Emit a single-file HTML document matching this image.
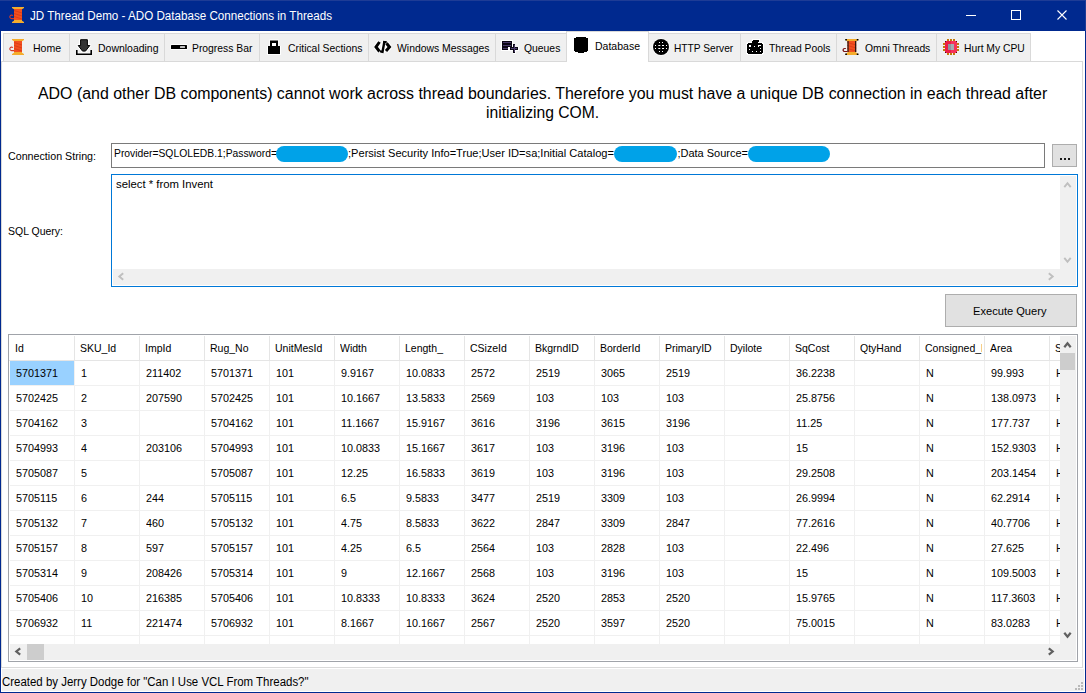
<!DOCTYPE html>
<html><head><meta charset="utf-8"><style>
html,body{margin:0;padding:0;width:1086px;height:693px;overflow:hidden;background:#fff}
body div, body span, body svg{position:absolute}
.t{font-family:"Liberation Sans", sans-serif;white-space:pre;transform-origin:0 0;color:#000}
</style></head><body>
<div style="left:0px;top:0px;width:1086px;height:31px;background:#00298F"></div><div style="left:0px;top:0px;width:1px;height:693px;background:#00298F"></div><div style="left:1085px;top:0px;width:1px;height:693px;background:#00298F"></div><div style="left:0px;top:692px;width:1086px;height:1px;background:#00298F"></div><div style="left:0px;top:0px;width:1086px;height:1px;background:#1E3C96"></div><div style="left:1085px;top:0px;width:1px;height:31px;background:#1E3C96"></div><svg style="left:9px;top:7px" width="16" height="16" viewBox="0 0 16 16" preserveAspectRatio="none"><path d="M3 0h12v1l-2 1.2v0.8h-8v-0.8l-2-1.2z" fill="#F4AC2C"/><rect x="5" y="2" width="8" height="11" fill="#F24F1F"/><path d="M5 3.5l8 2.5M5 6.5l8 2.5M5 9.5l8 2.5" stroke="#D43817" stroke-width="0.9" opacity="0.8"/><path d="M5 13h8v0.8l2 1.2v1h-12v-1l2-1.2z" fill="#F4AC2C"/><path d="M5 11.6H2.6A1.75 1.75 0 1 1 3.9 8.7" stroke="#D23A2A" stroke-width="1.1" fill="none"/></svg><span class="t" style="left:30px;top:10px;font-size:12px;line-height:12px;color:#fff;transform:scaleX(0.9688181701527011);">JD Thread Demo - ADO Database Connections in Threads</span><div style="left:966px;top:15px;width:10px;height:1px;background:#fff"></div><div style="left:1011px;top:10px;width:10px;height:10px;border:1px solid #fff;box-sizing:border-box"></div><svg style="left:1057px;top:10px" width="10" height="10" viewBox="0 0 10 10"><path d="M0.5 0.5L9.5 9.5M9.5 0.5L0.5 9.5" stroke="#fff" stroke-width="1.1"/></svg><div style="left:1px;top:61px;width:1082px;height:607px;border:1px solid #D9D9D9;box-sizing:border-box;background:#fff"></div><div style="left:3px;top:33px;width:67px;height:29px;background:#F0F0F0;border:1px solid #D9D9D9;box-sizing:border-box"></div><div style="left:69px;top:33px;width:96px;height:29px;background:#F0F0F0;border:1px solid #D9D9D9;box-sizing:border-box"></div><div style="left:164px;top:33px;width:96px;height:29px;background:#F0F0F0;border:1px solid #D9D9D9;box-sizing:border-box"></div><div style="left:259px;top:33px;width:110px;height:29px;background:#F0F0F0;border:1px solid #D9D9D9;box-sizing:border-box"></div><div style="left:368px;top:33px;width:128px;height:29px;background:#F0F0F0;border:1px solid #D9D9D9;box-sizing:border-box"></div><div style="left:495px;top:33px;width:72px;height:29px;background:#F0F0F0;border:1px solid #D9D9D9;box-sizing:border-box"></div><div style="left:648px;top:33px;width:93px;height:29px;background:#F0F0F0;border:1px solid #D9D9D9;box-sizing:border-box"></div><div style="left:740px;top:33px;width:97px;height:29px;background:#F0F0F0;border:1px solid #D9D9D9;box-sizing:border-box"></div><div style="left:836px;top:33px;width:101px;height:29px;background:#F0F0F0;border:1px solid #D9D9D9;box-sizing:border-box"></div><div style="left:936px;top:33px;width:95px;height:29px;background:#F0F0F0;border:1px solid #D9D9D9;box-sizing:border-box"></div><div style="left:566px;top:31px;width:83px;height:31px;background:#fff;border:1px solid #D9D9D9;border-bottom:none;box-sizing:border-box"></div><span class="t" style="left:32.5px;top:43px;font-size:11px;line-height:11px;color:#000;transform:scaleX(0.9567291311754684);">Home</span><span class="t" style="left:97.5px;top:43px;font-size:11px;line-height:11px;color:#000;transform:scaleX(0.9512578616352201);">Downloading</span><span class="t" style="left:192.4px;top:43px;font-size:11px;line-height:11px;color:#000;transform:scaleX(0.9408099688473519);">Progress Bar</span><span class="t" style="left:287.6px;top:43px;font-size:11px;line-height:11px;color:#000;transform:scaleX(0.9429657794676806);">Critical Sections</span><span class="t" style="left:396.5px;top:43px;font-size:11px;line-height:11px;color:#000;transform:scaleX(0.9458077709611452);">Windows Messages</span><span class="t" style="left:523.7px;top:43px;font-size:11px;line-height:11px;color:#000;transform:scaleX(0.9428571428571428);">Queues</span><span class="t" style="left:674.4px;top:43px;font-size:11px;line-height:11px;color:#000;transform:scaleX(0.925);">HTTP Server</span><span class="t" style="left:769px;top:43px;font-size:11px;line-height:11px;color:#000;transform:scaleX(0.9388379204892965);">Thread Pools</span><span class="t" style="left:864.9px;top:43px;font-size:11px;line-height:11px;color:#000;transform:scaleX(0.939568345323741);">Omni Threads</span><span class="t" style="left:964.4px;top:43px;font-size:11px;line-height:11px;color:#000;transform:scaleX(0.9382716049382716);">Hurt My CPU</span><span class="t" style="left:594.8px;top:41px;font-size:11px;line-height:11px;color:#000;transform:scaleX(0.9554140127388535);">Database</span><span class="t" style="left:38px;top:86px;font-size:16px;line-height:16px;color:#000;transform:scaleX(0.9947757516017743);">ADO (and other DB components) cannot work across thread boundaries. Therefore you must have a unique DB connection in each thread after</span><span class="t" style="left:485.9px;top:105px;font-size:16px;line-height:16px;color:#000;transform:scaleX(0.9793234708884851);">initializing COM.</span><span class="t" style="left:8px;top:151px;font-size:11px;line-height:11px;color:#000;transform:scaleX(0.9723756906077348);">Connection String:</span><div style="left:111px;top:143px;width:934px;height:25px;border:1px solid #7A7A7A;box-sizing:border-box;background:#fff"></div><span class="t" style="left:113.5px;top:148px;font-size:11px;line-height:11px;color:#000;transform:scaleX(0.9387237963602857);">Provider=SQLOLEDB.1;Password=</span><div style="left:276px;top:146px;width:72px;height:16px;background:#00A2E8;border-radius:8px"></div><span class="t" style="left:348px;top:148px;font-size:11px;line-height:11px;color:#000;transform:scaleX(1.0074994318612227);">;Persist Security Info=True;User ID=sa;Initial Catalog=</span><div style="left:614px;top:146px;width:63px;height:16px;background:#00A2E8;border-radius:8px"></div><span class="t" style="left:677.4px;top:148px;font-size:11px;line-height:11px;color:#000;">;Data Source=</span><div style="left:748px;top:146px;width:82px;height:16px;background:#00A2E8;border-radius:8px"></div><div style="left:1052px;top:144px;width:25px;height:23px;background:#E1E1E1;border:1px solid #ADADAD;box-sizing:border-box"></div><div style="left:1059.5px;top:158px;width:2px;height:2px;background:#1a1a1a"></div><div style="left:1063.5px;top:158px;width:2px;height:2px;background:#1a1a1a"></div><div style="left:1067.5px;top:158px;width:2px;height:2px;background:#1a1a1a"></div><span class="t" style="left:8px;top:226px;font-size:11px;line-height:11px;color:#000;transform:scaleX(0.9537020981446159);">SQL Query:</span><div style="left:111px;top:174px;width:967px;height:113px;border:1px solid #0078D7;box-sizing:border-box;background:#fff"></div><span class="t" style="left:116px;top:179px;font-size:11px;line-height:11px;color:#000;transform:scaleX(1.0301614273576891);">select * from Invent</span><div style="left:113px;top:269px;width:947px;height:16px;background:#F0F0F0"></div><div style="left:1060px;top:176px;width:16px;height:109px;background:#F0F0F0"></div><div style="left:945px;top:294px;width:132px;height:33px;background:#E1E1E1;border:1px solid #ADADAD;box-sizing:border-box"></div><span class="t" style="left:973.3px;top:306px;font-size:11px;line-height:11px;color:#000;transform:scaleX(1.01);">Execute Query</span><div style="left:8px;top:334px;width:1070px;height:328px;border:1px solid #A0A3A9;box-sizing:border-box;background:#fff"></div><div style="left:9px;top:335px;width:1051px;height:309px;overflow:hidden"><div style="left:1px;top:26px;width:64px;height:24px;background:#99D1FF"></div><div style="left:0px;top:25px;width:1051px;height:1px;background:#E5E5E5"></div><div style="left:65px;top:1px;width:1px;height:24px;background:#E5E5E5"></div><div style="left:65px;top:26px;width:1px;height:300px;background:#F0F0F0"></div><div style="left:130px;top:1px;width:1px;height:24px;background:#E5E5E5"></div><div style="left:130px;top:26px;width:1px;height:300px;background:#F0F0F0"></div><div style="left:195px;top:1px;width:1px;height:24px;background:#E5E5E5"></div><div style="left:195px;top:26px;width:1px;height:300px;background:#F0F0F0"></div><div style="left:260px;top:1px;width:1px;height:24px;background:#E5E5E5"></div><div style="left:260px;top:26px;width:1px;height:300px;background:#F0F0F0"></div><div style="left:325px;top:1px;width:1px;height:24px;background:#E5E5E5"></div><div style="left:325px;top:26px;width:1px;height:300px;background:#F0F0F0"></div><div style="left:390px;top:1px;width:1px;height:24px;background:#E5E5E5"></div><div style="left:390px;top:26px;width:1px;height:300px;background:#F0F0F0"></div><div style="left:455px;top:1px;width:1px;height:24px;background:#E5E5E5"></div><div style="left:455px;top:26px;width:1px;height:300px;background:#F0F0F0"></div><div style="left:520px;top:1px;width:1px;height:24px;background:#E5E5E5"></div><div style="left:520px;top:26px;width:1px;height:300px;background:#F0F0F0"></div><div style="left:585px;top:1px;width:1px;height:24px;background:#E5E5E5"></div><div style="left:585px;top:26px;width:1px;height:300px;background:#F0F0F0"></div><div style="left:650px;top:1px;width:1px;height:24px;background:#E5E5E5"></div><div style="left:650px;top:26px;width:1px;height:300px;background:#F0F0F0"></div><div style="left:715px;top:1px;width:1px;height:24px;background:#E5E5E5"></div><div style="left:715px;top:26px;width:1px;height:300px;background:#F0F0F0"></div><div style="left:780px;top:1px;width:1px;height:24px;background:#E5E5E5"></div><div style="left:780px;top:26px;width:1px;height:300px;background:#F0F0F0"></div><div style="left:845px;top:1px;width:1px;height:24px;background:#E5E5E5"></div><div style="left:845px;top:26px;width:1px;height:300px;background:#F0F0F0"></div><div style="left:910px;top:1px;width:1px;height:24px;background:#E5E5E5"></div><div style="left:910px;top:26px;width:1px;height:300px;background:#F0F0F0"></div><div style="left:975px;top:1px;width:1px;height:24px;background:#E5E5E5"></div><div style="left:975px;top:26px;width:1px;height:300px;background:#F0F0F0"></div><div style="left:1040px;top:1px;width:1px;height:24px;background:#E5E5E5"></div><div style="left:1040px;top:26px;width:1px;height:300px;background:#F0F0F0"></div><div style="left:1px;top:50px;width:1050px;height:1px;background:#F0F0F0"></div><div style="left:1px;top:75px;width:1050px;height:1px;background:#F0F0F0"></div><div style="left:1px;top:100px;width:1050px;height:1px;background:#F0F0F0"></div><div style="left:1px;top:125px;width:1050px;height:1px;background:#F0F0F0"></div><div style="left:1px;top:150px;width:1050px;height:1px;background:#F0F0F0"></div><div style="left:1px;top:175px;width:1050px;height:1px;background:#F0F0F0"></div><div style="left:1px;top:200px;width:1050px;height:1px;background:#F0F0F0"></div><div style="left:1px;top:225px;width:1050px;height:1px;background:#F0F0F0"></div><div style="left:1px;top:250px;width:1050px;height:1px;background:#F0F0F0"></div><div style="left:1px;top:275px;width:1050px;height:1px;background:#F0F0F0"></div><div style="left:1px;top:300px;width:1050px;height:1px;background:#F0F0F0"></div><div style="left:1px;top:325px;width:1050px;height:1px;background:#F0F0F0"></div><span class="t" style="left:6px;top:8px;font-size:11px;line-height:11px;width:59px;overflow:hidden"><span style="position:static;display:inline-block;transform:scaleX(0.955);transform-origin:0 0">Id</span></span><span class="t" style="left:71px;top:8px;font-size:11px;line-height:11px;width:59px;overflow:hidden"><span style="position:static;display:inline-block;transform:scaleX(0.955);transform-origin:0 0">SKU_Id</span></span><span class="t" style="left:136px;top:8px;font-size:11px;line-height:11px;width:59px;overflow:hidden"><span style="position:static;display:inline-block;transform:scaleX(0.955);transform-origin:0 0">ImpId</span></span><span class="t" style="left:201px;top:8px;font-size:11px;line-height:11px;width:59px;overflow:hidden"><span style="position:static;display:inline-block;transform:scaleX(0.955);transform-origin:0 0">Rug_No</span></span><span class="t" style="left:266px;top:8px;font-size:11px;line-height:11px;width:59px;overflow:hidden"><span style="position:static;display:inline-block;transform:scaleX(0.955);transform-origin:0 0">UnitMesId</span></span><span class="t" style="left:331px;top:8px;font-size:11px;line-height:11px;width:59px;overflow:hidden"><span style="position:static;display:inline-block;transform:scaleX(0.955);transform-origin:0 0">Width</span></span><span class="t" style="left:396px;top:8px;font-size:11px;line-height:11px;width:59px;overflow:hidden"><span style="position:static;display:inline-block;transform:scaleX(0.955);transform-origin:0 0">Length_</span></span><span class="t" style="left:461px;top:8px;font-size:11px;line-height:11px;width:59px;overflow:hidden"><span style="position:static;display:inline-block;transform:scaleX(0.955);transform-origin:0 0">CSizeId</span></span><span class="t" style="left:526px;top:8px;font-size:11px;line-height:11px;width:59px;overflow:hidden"><span style="position:static;display:inline-block;transform:scaleX(0.955);transform-origin:0 0">BkgrndID</span></span><span class="t" style="left:591px;top:8px;font-size:11px;line-height:11px;width:59px;overflow:hidden"><span style="position:static;display:inline-block;transform:scaleX(0.955);transform-origin:0 0">BorderId</span></span><span class="t" style="left:656px;top:8px;font-size:11px;line-height:11px;width:59px;overflow:hidden"><span style="position:static;display:inline-block;transform:scaleX(0.955);transform-origin:0 0">PrimaryID</span></span><span class="t" style="left:721px;top:8px;font-size:11px;line-height:11px;width:59px;overflow:hidden"><span style="position:static;display:inline-block;transform:scaleX(0.955);transform-origin:0 0">Dyilote</span></span><span class="t" style="left:786px;top:8px;font-size:11px;line-height:11px;width:59px;overflow:hidden"><span style="position:static;display:inline-block;transform:scaleX(0.955);transform-origin:0 0">SqCost</span></span><span class="t" style="left:851px;top:8px;font-size:11px;line-height:11px;width:59px;overflow:hidden"><span style="position:static;display:inline-block;transform:scaleX(0.955);transform-origin:0 0">QtyHand</span></span><span class="t" style="left:916px;top:8px;font-size:11px;line-height:11px;width:57px;overflow:hidden"><span style="position:static;display:inline-block;transform:scaleX(0.955);transform-origin:0 0">Consigned_F</span></span><span class="t" style="left:981px;top:8px;font-size:11px;line-height:11px;width:59px;overflow:hidden"><span style="position:static;display:inline-block;transform:scaleX(0.955);transform-origin:0 0">Area</span></span><span class="t" style="left:1046px;top:8px;font-size:11px;line-height:11px;width:59px;overflow:hidden"><span style="position:static;display:inline-block;transform:scaleX(0.955);transform-origin:0 0">S</span></span><span class="t" style="left:6.5px;top:33px;font-size:11px;line-height:11px;transform:scaleX(0.98)">5701371</span><span class="t" style="left:71.5px;top:33px;font-size:11px;line-height:11px;transform:scaleX(0.98)">1</span><span class="t" style="left:136.5px;top:33px;font-size:11px;line-height:11px;transform:scaleX(0.98)">211402</span><span class="t" style="left:201.5px;top:33px;font-size:11px;line-height:11px;transform:scaleX(0.98)">5701371</span><span class="t" style="left:266.5px;top:33px;font-size:11px;line-height:11px;transform:scaleX(0.98)">101</span><span class="t" style="left:331.5px;top:33px;font-size:11px;line-height:11px;transform:scaleX(0.98)">9.9167</span><span class="t" style="left:396.5px;top:33px;font-size:11px;line-height:11px;transform:scaleX(0.98)">10.0833</span><span class="t" style="left:461.5px;top:33px;font-size:11px;line-height:11px;transform:scaleX(0.98)">2572</span><span class="t" style="left:526.5px;top:33px;font-size:11px;line-height:11px;transform:scaleX(0.98)">2519</span><span class="t" style="left:591.5px;top:33px;font-size:11px;line-height:11px;transform:scaleX(0.98)">3065</span><span class="t" style="left:656.5px;top:33px;font-size:11px;line-height:11px;transform:scaleX(0.98)">2519</span><span class="t" style="left:786.5px;top:33px;font-size:11px;line-height:11px;transform:scaleX(0.98)">36.2238</span><span class="t" style="left:916.5px;top:33px;font-size:11px;line-height:11px;transform:scaleX(0.98)">N</span><span class="t" style="left:981.5px;top:33px;font-size:11px;line-height:11px;transform:scaleX(0.98)">99.993</span><span class="t" style="left:1046.5px;top:33px;font-size:11px;line-height:11px;transform:scaleX(0.98)">H</span><span class="t" style="left:6.5px;top:58px;font-size:11px;line-height:11px;transform:scaleX(0.98)">5702425</span><span class="t" style="left:71.5px;top:58px;font-size:11px;line-height:11px;transform:scaleX(0.98)">2</span><span class="t" style="left:136.5px;top:58px;font-size:11px;line-height:11px;transform:scaleX(0.98)">207590</span><span class="t" style="left:201.5px;top:58px;font-size:11px;line-height:11px;transform:scaleX(0.98)">5702425</span><span class="t" style="left:266.5px;top:58px;font-size:11px;line-height:11px;transform:scaleX(0.98)">101</span><span class="t" style="left:331.5px;top:58px;font-size:11px;line-height:11px;transform:scaleX(0.98)">10.1667</span><span class="t" style="left:396.5px;top:58px;font-size:11px;line-height:11px;transform:scaleX(0.98)">13.5833</span><span class="t" style="left:461.5px;top:58px;font-size:11px;line-height:11px;transform:scaleX(0.98)">2569</span><span class="t" style="left:526.5px;top:58px;font-size:11px;line-height:11px;transform:scaleX(0.98)">103</span><span class="t" style="left:591.5px;top:58px;font-size:11px;line-height:11px;transform:scaleX(0.98)">103</span><span class="t" style="left:656.5px;top:58px;font-size:11px;line-height:11px;transform:scaleX(0.98)">103</span><span class="t" style="left:786.5px;top:58px;font-size:11px;line-height:11px;transform:scaleX(0.98)">25.8756</span><span class="t" style="left:916.5px;top:58px;font-size:11px;line-height:11px;transform:scaleX(0.98)">N</span><span class="t" style="left:981.5px;top:58px;font-size:11px;line-height:11px;transform:scaleX(0.98)">138.0973</span><span class="t" style="left:1046.5px;top:58px;font-size:11px;line-height:11px;transform:scaleX(0.98)">H</span><span class="t" style="left:6.5px;top:83px;font-size:11px;line-height:11px;transform:scaleX(0.98)">5704162</span><span class="t" style="left:71.5px;top:83px;font-size:11px;line-height:11px;transform:scaleX(0.98)">3</span><span class="t" style="left:201.5px;top:83px;font-size:11px;line-height:11px;transform:scaleX(0.98)">5704162</span><span class="t" style="left:266.5px;top:83px;font-size:11px;line-height:11px;transform:scaleX(0.98)">101</span><span class="t" style="left:331.5px;top:83px;font-size:11px;line-height:11px;transform:scaleX(0.98)">11.1667</span><span class="t" style="left:396.5px;top:83px;font-size:11px;line-height:11px;transform:scaleX(0.98)">15.9167</span><span class="t" style="left:461.5px;top:83px;font-size:11px;line-height:11px;transform:scaleX(0.98)">3616</span><span class="t" style="left:526.5px;top:83px;font-size:11px;line-height:11px;transform:scaleX(0.98)">3196</span><span class="t" style="left:591.5px;top:83px;font-size:11px;line-height:11px;transform:scaleX(0.98)">3615</span><span class="t" style="left:656.5px;top:83px;font-size:11px;line-height:11px;transform:scaleX(0.98)">3196</span><span class="t" style="left:786.5px;top:83px;font-size:11px;line-height:11px;transform:scaleX(0.98)">11.25</span><span class="t" style="left:916.5px;top:83px;font-size:11px;line-height:11px;transform:scaleX(0.98)">N</span><span class="t" style="left:981.5px;top:83px;font-size:11px;line-height:11px;transform:scaleX(0.98)">177.737</span><span class="t" style="left:1046.5px;top:83px;font-size:11px;line-height:11px;transform:scaleX(0.98)">H</span><span class="t" style="left:6.5px;top:108px;font-size:11px;line-height:11px;transform:scaleX(0.98)">5704993</span><span class="t" style="left:71.5px;top:108px;font-size:11px;line-height:11px;transform:scaleX(0.98)">4</span><span class="t" style="left:136.5px;top:108px;font-size:11px;line-height:11px;transform:scaleX(0.98)">203106</span><span class="t" style="left:201.5px;top:108px;font-size:11px;line-height:11px;transform:scaleX(0.98)">5704993</span><span class="t" style="left:266.5px;top:108px;font-size:11px;line-height:11px;transform:scaleX(0.98)">101</span><span class="t" style="left:331.5px;top:108px;font-size:11px;line-height:11px;transform:scaleX(0.98)">10.0833</span><span class="t" style="left:396.5px;top:108px;font-size:11px;line-height:11px;transform:scaleX(0.98)">15.1667</span><span class="t" style="left:461.5px;top:108px;font-size:11px;line-height:11px;transform:scaleX(0.98)">3617</span><span class="t" style="left:526.5px;top:108px;font-size:11px;line-height:11px;transform:scaleX(0.98)">103</span><span class="t" style="left:591.5px;top:108px;font-size:11px;line-height:11px;transform:scaleX(0.98)">3196</span><span class="t" style="left:656.5px;top:108px;font-size:11px;line-height:11px;transform:scaleX(0.98)">103</span><span class="t" style="left:786.5px;top:108px;font-size:11px;line-height:11px;transform:scaleX(0.98)">15</span><span class="t" style="left:916.5px;top:108px;font-size:11px;line-height:11px;transform:scaleX(0.98)">N</span><span class="t" style="left:981.5px;top:108px;font-size:11px;line-height:11px;transform:scaleX(0.98)">152.9303</span><span class="t" style="left:1046.5px;top:108px;font-size:11px;line-height:11px;transform:scaleX(0.98)">H</span><span class="t" style="left:6.5px;top:133px;font-size:11px;line-height:11px;transform:scaleX(0.98)">5705087</span><span class="t" style="left:71.5px;top:133px;font-size:11px;line-height:11px;transform:scaleX(0.98)">5</span><span class="t" style="left:201.5px;top:133px;font-size:11px;line-height:11px;transform:scaleX(0.98)">5705087</span><span class="t" style="left:266.5px;top:133px;font-size:11px;line-height:11px;transform:scaleX(0.98)">101</span><span class="t" style="left:331.5px;top:133px;font-size:11px;line-height:11px;transform:scaleX(0.98)">12.25</span><span class="t" style="left:396.5px;top:133px;font-size:11px;line-height:11px;transform:scaleX(0.98)">16.5833</span><span class="t" style="left:461.5px;top:133px;font-size:11px;line-height:11px;transform:scaleX(0.98)">3619</span><span class="t" style="left:526.5px;top:133px;font-size:11px;line-height:11px;transform:scaleX(0.98)">103</span><span class="t" style="left:591.5px;top:133px;font-size:11px;line-height:11px;transform:scaleX(0.98)">3196</span><span class="t" style="left:656.5px;top:133px;font-size:11px;line-height:11px;transform:scaleX(0.98)">103</span><span class="t" style="left:786.5px;top:133px;font-size:11px;line-height:11px;transform:scaleX(0.98)">29.2508</span><span class="t" style="left:916.5px;top:133px;font-size:11px;line-height:11px;transform:scaleX(0.98)">N</span><span class="t" style="left:981.5px;top:133px;font-size:11px;line-height:11px;transform:scaleX(0.98)">203.1454</span><span class="t" style="left:1046.5px;top:133px;font-size:11px;line-height:11px;transform:scaleX(0.98)">H</span><span class="t" style="left:6.5px;top:158px;font-size:11px;line-height:11px;transform:scaleX(0.98)">5705115</span><span class="t" style="left:71.5px;top:158px;font-size:11px;line-height:11px;transform:scaleX(0.98)">6</span><span class="t" style="left:136.5px;top:158px;font-size:11px;line-height:11px;transform:scaleX(0.98)">244</span><span class="t" style="left:201.5px;top:158px;font-size:11px;line-height:11px;transform:scaleX(0.98)">5705115</span><span class="t" style="left:266.5px;top:158px;font-size:11px;line-height:11px;transform:scaleX(0.98)">101</span><span class="t" style="left:331.5px;top:158px;font-size:11px;line-height:11px;transform:scaleX(0.98)">6.5</span><span class="t" style="left:396.5px;top:158px;font-size:11px;line-height:11px;transform:scaleX(0.98)">9.5833</span><span class="t" style="left:461.5px;top:158px;font-size:11px;line-height:11px;transform:scaleX(0.98)">3477</span><span class="t" style="left:526.5px;top:158px;font-size:11px;line-height:11px;transform:scaleX(0.98)">2519</span><span class="t" style="left:591.5px;top:158px;font-size:11px;line-height:11px;transform:scaleX(0.98)">3309</span><span class="t" style="left:656.5px;top:158px;font-size:11px;line-height:11px;transform:scaleX(0.98)">103</span><span class="t" style="left:786.5px;top:158px;font-size:11px;line-height:11px;transform:scaleX(0.98)">26.9994</span><span class="t" style="left:916.5px;top:158px;font-size:11px;line-height:11px;transform:scaleX(0.98)">N</span><span class="t" style="left:981.5px;top:158px;font-size:11px;line-height:11px;transform:scaleX(0.98)">62.2914</span><span class="t" style="left:1046.5px;top:158px;font-size:11px;line-height:11px;transform:scaleX(0.98)">H</span><span class="t" style="left:6.5px;top:183px;font-size:11px;line-height:11px;transform:scaleX(0.98)">5705132</span><span class="t" style="left:71.5px;top:183px;font-size:11px;line-height:11px;transform:scaleX(0.98)">7</span><span class="t" style="left:136.5px;top:183px;font-size:11px;line-height:11px;transform:scaleX(0.98)">460</span><span class="t" style="left:201.5px;top:183px;font-size:11px;line-height:11px;transform:scaleX(0.98)">5705132</span><span class="t" style="left:266.5px;top:183px;font-size:11px;line-height:11px;transform:scaleX(0.98)">101</span><span class="t" style="left:331.5px;top:183px;font-size:11px;line-height:11px;transform:scaleX(0.98)">4.75</span><span class="t" style="left:396.5px;top:183px;font-size:11px;line-height:11px;transform:scaleX(0.98)">8.5833</span><span class="t" style="left:461.5px;top:183px;font-size:11px;line-height:11px;transform:scaleX(0.98)">3622</span><span class="t" style="left:526.5px;top:183px;font-size:11px;line-height:11px;transform:scaleX(0.98)">2847</span><span class="t" style="left:591.5px;top:183px;font-size:11px;line-height:11px;transform:scaleX(0.98)">3309</span><span class="t" style="left:656.5px;top:183px;font-size:11px;line-height:11px;transform:scaleX(0.98)">2847</span><span class="t" style="left:786.5px;top:183px;font-size:11px;line-height:11px;transform:scaleX(0.98)">77.2616</span><span class="t" style="left:916.5px;top:183px;font-size:11px;line-height:11px;transform:scaleX(0.98)">N</span><span class="t" style="left:981.5px;top:183px;font-size:11px;line-height:11px;transform:scaleX(0.98)">40.7706</span><span class="t" style="left:1046.5px;top:183px;font-size:11px;line-height:11px;transform:scaleX(0.98)">H</span><span class="t" style="left:6.5px;top:208px;font-size:11px;line-height:11px;transform:scaleX(0.98)">5705157</span><span class="t" style="left:71.5px;top:208px;font-size:11px;line-height:11px;transform:scaleX(0.98)">8</span><span class="t" style="left:136.5px;top:208px;font-size:11px;line-height:11px;transform:scaleX(0.98)">597</span><span class="t" style="left:201.5px;top:208px;font-size:11px;line-height:11px;transform:scaleX(0.98)">5705157</span><span class="t" style="left:266.5px;top:208px;font-size:11px;line-height:11px;transform:scaleX(0.98)">101</span><span class="t" style="left:331.5px;top:208px;font-size:11px;line-height:11px;transform:scaleX(0.98)">4.25</span><span class="t" style="left:396.5px;top:208px;font-size:11px;line-height:11px;transform:scaleX(0.98)">6.5</span><span class="t" style="left:461.5px;top:208px;font-size:11px;line-height:11px;transform:scaleX(0.98)">2564</span><span class="t" style="left:526.5px;top:208px;font-size:11px;line-height:11px;transform:scaleX(0.98)">103</span><span class="t" style="left:591.5px;top:208px;font-size:11px;line-height:11px;transform:scaleX(0.98)">2828</span><span class="t" style="left:656.5px;top:208px;font-size:11px;line-height:11px;transform:scaleX(0.98)">103</span><span class="t" style="left:786.5px;top:208px;font-size:11px;line-height:11px;transform:scaleX(0.98)">22.496</span><span class="t" style="left:916.5px;top:208px;font-size:11px;line-height:11px;transform:scaleX(0.98)">N</span><span class="t" style="left:981.5px;top:208px;font-size:11px;line-height:11px;transform:scaleX(0.98)">27.625</span><span class="t" style="left:1046.5px;top:208px;font-size:11px;line-height:11px;transform:scaleX(0.98)">H</span><span class="t" style="left:6.5px;top:233px;font-size:11px;line-height:11px;transform:scaleX(0.98)">5705314</span><span class="t" style="left:71.5px;top:233px;font-size:11px;line-height:11px;transform:scaleX(0.98)">9</span><span class="t" style="left:136.5px;top:233px;font-size:11px;line-height:11px;transform:scaleX(0.98)">208426</span><span class="t" style="left:201.5px;top:233px;font-size:11px;line-height:11px;transform:scaleX(0.98)">5705314</span><span class="t" style="left:266.5px;top:233px;font-size:11px;line-height:11px;transform:scaleX(0.98)">101</span><span class="t" style="left:331.5px;top:233px;font-size:11px;line-height:11px;transform:scaleX(0.98)">9</span><span class="t" style="left:396.5px;top:233px;font-size:11px;line-height:11px;transform:scaleX(0.98)">12.1667</span><span class="t" style="left:461.5px;top:233px;font-size:11px;line-height:11px;transform:scaleX(0.98)">2568</span><span class="t" style="left:526.5px;top:233px;font-size:11px;line-height:11px;transform:scaleX(0.98)">103</span><span class="t" style="left:591.5px;top:233px;font-size:11px;line-height:11px;transform:scaleX(0.98)">3196</span><span class="t" style="left:656.5px;top:233px;font-size:11px;line-height:11px;transform:scaleX(0.98)">103</span><span class="t" style="left:786.5px;top:233px;font-size:11px;line-height:11px;transform:scaleX(0.98)">15</span><span class="t" style="left:916.5px;top:233px;font-size:11px;line-height:11px;transform:scaleX(0.98)">N</span><span class="t" style="left:981.5px;top:233px;font-size:11px;line-height:11px;transform:scaleX(0.98)">109.5003</span><span class="t" style="left:1046.5px;top:233px;font-size:11px;line-height:11px;transform:scaleX(0.98)">H</span><span class="t" style="left:6.5px;top:258px;font-size:11px;line-height:11px;transform:scaleX(0.98)">5705406</span><span class="t" style="left:71.5px;top:258px;font-size:11px;line-height:11px;transform:scaleX(0.98)">10</span><span class="t" style="left:136.5px;top:258px;font-size:11px;line-height:11px;transform:scaleX(0.98)">216385</span><span class="t" style="left:201.5px;top:258px;font-size:11px;line-height:11px;transform:scaleX(0.98)">5705406</span><span class="t" style="left:266.5px;top:258px;font-size:11px;line-height:11px;transform:scaleX(0.98)">101</span><span class="t" style="left:331.5px;top:258px;font-size:11px;line-height:11px;transform:scaleX(0.98)">10.8333</span><span class="t" style="left:396.5px;top:258px;font-size:11px;line-height:11px;transform:scaleX(0.98)">10.8333</span><span class="t" style="left:461.5px;top:258px;font-size:11px;line-height:11px;transform:scaleX(0.98)">3624</span><span class="t" style="left:526.5px;top:258px;font-size:11px;line-height:11px;transform:scaleX(0.98)">2520</span><span class="t" style="left:591.5px;top:258px;font-size:11px;line-height:11px;transform:scaleX(0.98)">2853</span><span class="t" style="left:656.5px;top:258px;font-size:11px;line-height:11px;transform:scaleX(0.98)">2520</span><span class="t" style="left:786.5px;top:258px;font-size:11px;line-height:11px;transform:scaleX(0.98)">15.9765</span><span class="t" style="left:916.5px;top:258px;font-size:11px;line-height:11px;transform:scaleX(0.98)">N</span><span class="t" style="left:981.5px;top:258px;font-size:11px;line-height:11px;transform:scaleX(0.98)">117.3603</span><span class="t" style="left:1046.5px;top:258px;font-size:11px;line-height:11px;transform:scaleX(0.98)">H</span><span class="t" style="left:6.5px;top:283px;font-size:11px;line-height:11px;transform:scaleX(0.98)">5706932</span><span class="t" style="left:71.5px;top:283px;font-size:11px;line-height:11px;transform:scaleX(0.98)">11</span><span class="t" style="left:136.5px;top:283px;font-size:11px;line-height:11px;transform:scaleX(0.98)">221474</span><span class="t" style="left:201.5px;top:283px;font-size:11px;line-height:11px;transform:scaleX(0.98)">5706932</span><span class="t" style="left:266.5px;top:283px;font-size:11px;line-height:11px;transform:scaleX(0.98)">101</span><span class="t" style="left:331.5px;top:283px;font-size:11px;line-height:11px;transform:scaleX(0.98)">8.1667</span><span class="t" style="left:396.5px;top:283px;font-size:11px;line-height:11px;transform:scaleX(0.98)">10.1667</span><span class="t" style="left:461.5px;top:283px;font-size:11px;line-height:11px;transform:scaleX(0.98)">2567</span><span class="t" style="left:526.5px;top:283px;font-size:11px;line-height:11px;transform:scaleX(0.98)">2520</span><span class="t" style="left:591.5px;top:283px;font-size:11px;line-height:11px;transform:scaleX(0.98)">3597</span><span class="t" style="left:656.5px;top:283px;font-size:11px;line-height:11px;transform:scaleX(0.98)">2520</span><span class="t" style="left:786.5px;top:283px;font-size:11px;line-height:11px;transform:scaleX(0.98)">75.0015</span><span class="t" style="left:916.5px;top:283px;font-size:11px;line-height:11px;transform:scaleX(0.98)">N</span><span class="t" style="left:981.5px;top:283px;font-size:11px;line-height:11px;transform:scaleX(0.98)">83.0283</span><span class="t" style="left:1046.5px;top:283px;font-size:11px;line-height:11px;transform:scaleX(0.98)">H</span></div><div style="left:10px;top:644px;width:1050px;height:16px;background:#F0F0F0"></div><div style="left:1060px;top:336px;width:16px;height:324px;background:#F0F0F0"></div><div style="left:27px;top:644px;width:17px;height:16px;background:#CDCDCD"></div><div style="left:1060px;top:353px;width:15px;height:17px;background:#CDCDCD"></div><svg style="left:0;top:0" width="1086" height="693">
<g fill="none" stroke-width="1.9" stroke="#BFBFBF">
<path d="M123.2 273.3L119.3 276.5L123.2 279.7"/><path d="M1048.8 273.3L1052.7 276.5L1048.8 279.7"/>
<path d="M1064.3 187.2L1067.5 183.2L1070.7 187.2"/><path d="M1064.3 257.8L1067.5 261.8L1070.7 257.8"/>
</g>
<g fill="none" stroke-width="2.2" stroke="#606060">
<path d="M20.2 648.3L16.3 651.5L20.2 654.7"/><path d="M1048.8 648.3L1052.7 651.5L1048.8 654.7"/>
<path d="M1064.3 347.2L1067.5 343.2L1070.7 347.2"/><path d="M1064.3 632.8L1067.5 636.8L1070.7 632.8"/>
</g></svg><div style="left:2px;top:669px;width:1082px;height:22px;background:#F0F0F0"></div><span class="t" style="left:2px;top:676px;font-size:12px;line-height:12px;color:#000;transform:scaleX(0.954);">Created by Jerry Dodge for &quot;Can I Use VCL From Threads?&quot;</span><div style="left:1081px;top:682px;width:2px;height:2px;background:#B9B9B9"></div><div style="left:1078px;top:685px;width:2px;height:2px;background:#B9B9B9"></div><div style="left:1081px;top:685px;width:2px;height:2px;background:#B9B9B9"></div><div style="left:1075px;top:688px;width:2px;height:2px;background:#B9B9B9"></div><div style="left:1078px;top:688px;width:2px;height:2px;background:#B9B9B9"></div><div style="left:1081px;top:688px;width:2px;height:2px;background:#B9B9B9"></div>
<svg style="left:9px;top:39px" width="16" height="16" viewBox="0 0 16 16" preserveAspectRatio="none"><path d="M3 0h12v1l-2 1.2v0.8h-8v-0.8l-2-1.2z" fill="#F4AC2C"/><rect x="5" y="2" width="8" height="11" fill="#F24F1F"/><path d="M5 3.5l8 2.5M5 6.5l8 2.5M5 9.5l8 2.5" stroke="#D43817" stroke-width="0.9" opacity="0.8"/><path d="M5 13h8v0.8l2 1.2v1h-12v-1l2-1.2z" fill="#F4AC2C"/><path d="M5 11.6H2.6A1.75 1.75 0 1 1 3.9 8.7" stroke="#D23A2A" stroke-width="1.1" fill="none"/></svg>
<svg style="left:842px;top:39px" width="17.5" height="16" viewBox="0 0 16 16" preserveAspectRatio="none"><path d="M3 0h12v1l-2 1.2v0.8h-8v-0.8l-2-1.2z" fill="#F4AC2C"/><rect x="5" y="2" width="8" height="11" fill="#F24F1F"/><path d="M5 3.5l8 2.5M5 6.5l8 2.5M5 9.5l8 2.5" stroke="#D43817" stroke-width="0.9" opacity="0.8"/><path d="M5 13h8v0.8l2 1.2v1h-12v-1l2-1.2z" fill="#F4AC2C"/><path d="M3 0h1.5v1.5h-1.5zM13.5 0h1.5v1.5h-1.5zM3 14.5h1.5v1.5h-1.5zM13.5 14.5h1.5v1.5h-1.5z" fill="#000"/><rect x="5" y="2" width="1" height="11" fill="#111"/><rect x="12" y="2" width="1" height="11" fill="#111"/><path d="M5 12.5h-2.5a1.2 1.2 0 0 1 0-3h1" stroke="#7A1010" stroke-width="1.2" fill="none"/></svg>
<svg style="left:76px;top:39px" width="16" height="16" viewBox="0 0 16 16">
<g stroke="#fff" stroke-width="3" fill="#fff" stroke-linejoin="round"><path d="M4.6 0.7h6.8v5.8h2.4l-4.3 5.6h-3l-4.3-5.6h2.4z"/><path d="M0.8 11v4.2h14.4v-4.2" fill="none"/></g>
<path d="M4.6 0.7h6.8v5.8h2.4l-4.3 5.6h-3l-4.3-5.6h2.4z" fill="#333" stroke="#000" stroke-width="1"/>
<path d="M0.8 11v4.2h14.4v-4.2" stroke="#000" stroke-width="1.6" fill="none"/>
</svg>
<svg style="left:170px;top:43px" width="18" height="8" viewBox="0 0 18 8">
<rect x="0.5" y="1" width="17" height="6" fill="#fff" rx="1"/>
<rect x="1" y="2" width="16" height="4" fill="#000" rx="0.5"/>
<rect x="10" y="3.2" width="5" height="1.6" fill="#fff" rx="0.5"/>
</svg>
<svg style="left:267px;top:39px" width="14" height="16" viewBox="0 0 14 16">
<path d="M0 7h14v9h-14zM2.5 0.5h9v6.5h-9z" fill="#fff"/>
<path d="M3 1.5h8v6h-2v-3.5h-4v3.5h-2z" fill="#000"/>
<rect x="1" y="7" width="12" height="8" fill="#000"/>
</svg>
<svg style="left:374px;top:40px" width="18" height="14" viewBox="0 0 18 14">
<g fill="none" stroke="#fff" stroke-width="5" stroke-linejoin="miter"><path d="M5.5 2L2 7l3.5 4.5"/><path d="M12.5 3L15.5 7l-3.5 4"/><path d="M10.5 1.5L8.5 12.5"/></g>
<g fill="none" stroke="#000" stroke-width="3" stroke-linejoin="miter"><path d="M5.5 2L2 7l3.5 4.5"/><path d="M12.5 3.2L15.5 7l-3.5 4"/></g>
<path d="M10.5 1L8.3 13" stroke="#000" stroke-width="2.4"/>
<rect x="9.2" y="1" width="3.5" height="2.2" fill="#000"/><rect x="6" y="10.5" width="3" height="2" fill="#000"/>
</svg>
<svg style="left:501px;top:40px" width="18" height="14" viewBox="0 0 18 14" shape-rendering="crispEdges">
<path d="M0 0h12v4h-1v7h-11z M9 4h3v3h6v4h-3v3h-3v-3h-3z" fill="#fff"/>
<rect x="1" y="1" width="10" height="2.6" fill="#0A0512"/><rect x="1" y="4" width="10" height="2.6" fill="#0A0512"/><rect x="1" y="7" width="6" height="2.8" fill="#0A0512"/>
<rect x="2" y="1.8" width="8" height="0.9" fill="#4A3A6A"/><rect x="2" y="4.8" width="8" height="0.9" fill="#4A3A6A"/><rect x="2" y="7.9" width="5" height="0.9" fill="#4A3A6A"/>
<rect x="12" y="4.4" width="2.2" height="8.3" fill="#0A0512"/><rect x="9" y="7.3" width="8" height="2.5" fill="#0A0512"/>
<rect x="12.7" y="5.2" width="0.9" height="6.8" fill="#4A3A6A"/><rect x="9.8" y="8.1" width="6.4" height="0.9" fill="#4A3A6A"/>
</svg>
<svg style="left:574px;top:37px" width="14" height="16" viewBox="0 0 14 16" shape-rendering="crispEdges">
<path d="M2 0h10v1h2v13h-1v1h-3v1h-6v-1h-3v-1h-1v-13h2z" fill="#000"/>
</svg>
<svg style="left:652px;top:38px" width="18" height="18" viewBox="0 0 18 18">
<circle cx="9" cy="9" r="8.8" fill="#fff"/>
<circle cx="9" cy="9" r="8" fill="#000"/>
<g fill="#fff"><rect x="7" y="4" width="1" height="1"/><rect x="10" y="4" width="1" height="1"/>
<rect x="3" y="7" width="1" height="1"/><rect x="6.3" y="7" width="2" height="1"/><rect x="10" y="7" width="2" height="1"/><rect x="14" y="7" width="1" height="1"/>
<rect x="3" y="10" width="1" height="1"/><rect x="6.3" y="10" width="2" height="1"/><rect x="10" y="10" width="2" height="1"/><rect x="14" y="10" width="1" height="1"/>
<rect x="7" y="13" width="1" height="1"/><rect x="10" y="13" width="1" height="1"/></g>
</svg>
<svg style="left:746px;top:39px" width="18" height="16" viewBox="0 0 18 16" shape-rendering="crispEdges">
<path d="M6 0h8v3h3v1h1v11h-1v1h-16v-1h-1v-11h1v-1h5z" fill="#fff"/>
<path d="M7 1h6v2h-1v1h4v1h1v9h-1v1h-14v-1h-1v-9h1v-1h4v-2h1z" fill="#000"/>
<g fill="#fff"><rect x="3" y="6" width="2" height="1"/><rect x="3" y="6" width="1" height="2"/><rect x="4" y="7" width="1" height="1"/><rect x="8" y="7" width="1" height="1"/>
<rect x="12" y="6" width="3" height="1"/><rect x="12" y="6" width="1" height="2"/><rect x="14" y="9" width="1" height="1"/>
<rect x="3" y="10" width="1" height="1"/><rect x="6" y="12" width="1" height="1"/><rect x="10" y="12" width="1" height="1"/><rect x="14" y="12" width="1" height="1"/></g>
</svg>
<svg style="left:943px;top:39px" width="16" height="16" viewBox="0 0 16 16" shape-rendering="crispEdges">
<g fill="#C27A0A"><rect x="4" y="0" width="2" height="2"/><rect x="7" y="0" width="2" height="2"/><rect x="10" y="0" width="2" height="2"/>
<rect x="4" y="14" width="2" height="2"/><rect x="7" y="14" width="2" height="2"/><rect x="10" y="14" width="2" height="2"/>
<rect x="0" y="4" width="2" height="2"/><rect x="0" y="7" width="2" height="2"/><rect x="0" y="10" width="2" height="2"/>
<rect x="14" y="4" width="2" height="2"/><rect x="14" y="7" width="2" height="2"/><rect x="14" y="10" width="2" height="2"/></g>
<rect x="2" y="2" width="12" height="12" fill="#EC1E48"/>
<rect x="8" y="2" width="6" height="12" fill="#F5315A"/>
<g fill="#5A0010"><rect x="2" y="2" width="1" height="1"/><rect x="13" y="2" width="1" height="1"/><rect x="2" y="13" width="1" height="1"/><rect x="13" y="13" width="1" height="1"/></g>
<rect x="5" y="5" width="6" height="6" fill="#8E969E"/><rect x="8" y="5" width="3" height="6" fill="#A4ABB2"/>
</svg>
</body></html>
